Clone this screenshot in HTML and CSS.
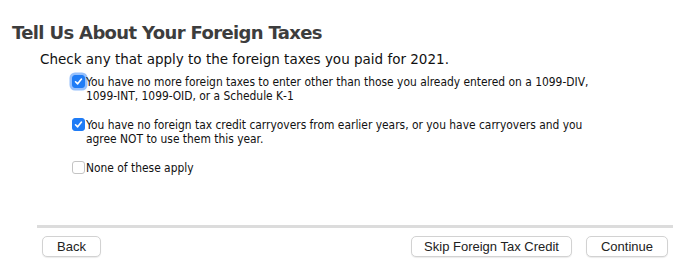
FILE: index.html
```html
<!DOCTYPE html>
<html>
<head>
<meta charset="utf-8">
<link rel="stylesheet" href="styles.css">
</head>
<body>
<div class="page">
  <h1 class="title">Tell Us About Your Foreign Taxes</h1>
  <p class="intro">Check any that apply to the foreign taxes you paid for 2021.</p>
  <div class="options">
    <label class="option">
      <span class="box checked focused"><svg viewBox="0 0 13 13" width="13" height="13"><path d="M3 6.8 L5.5 9.3 L10 3.6" fill="none" stroke="#fff" stroke-width="1.9" stroke-linecap="round" stroke-linejoin="round"/></svg></span>
      <span class="text">You have no more foreign taxes to enter other than those you already entered on a 1099‑DIV,<br>1099‑INT, 1099‑OID, or a Schedule K‑1</span>
    </label>
    <label class="option">
      <span class="box checked"><svg viewBox="0 0 13 13" width="13" height="13"><path d="M3 6.8 L5.5 9.3 L10 3.6" fill="none" stroke="#fff" stroke-width="1.9" stroke-linecap="round" stroke-linejoin="round"/></svg></span>
      <span class="text">You have no foreign tax credit carryovers from earlier years, or you have carryovers and you<br>agree NOT to use them this year.</span>
    </label>
    <label class="option">
      <span class="box"></span>
      <span class="text">None of these apply</span>
    </label>
  </div>
  <div class="footer">
    <button class="btn">Back</button>
    <div class="right">
      <button class="btn skip">Skip Foreign Tax Credit</button>
      <button class="btn">Continue</button>
    </div>
  </div>
</div>
</body>
</html>
```
FILE: styles.css
```css
html, body { margin: 0; padding: 0; background: #fff; }
body { font-family: "DejaVu Sans", Verdana, sans-serif; color: #000; }
.page { width: 697px; height: 272px; box-sizing: border-box; padding-top: 22px; }
.title {
  margin: 0 0 0 12px;
  font-size: 18px;
  font-weight: bold;
  color: #3d3d3d;
  line-height: 22px;
  letter-spacing: -0.65px;
}
.intro {
  margin: 7px 0 0 40px;
  font-size: 13.5px;
  line-height: 17px;
  color: #111;
}
.options { margin: 7px 0 0 72px; display: flex; flex-direction: column; gap: 15px; }
.option {
  display: flex; align-items: flex-start;
  font-family: "DejaVu Sans Condensed", "DejaVu Sans", sans-serif;
  font-size: 11.9px; line-height: 14px; color: #111;
}
.box {
  width: 13px; height: 13px; box-sizing: border-box;
  border: 1px solid #c4c4c4; border-radius: 3px; background: #fff;
  margin-top: 0; margin-right: 1px; flex: none;
  display: flex; align-items: center; justify-content: center;
}
.box.checked { background: #1f7cf6; border-color: #1f7cf6; }
.box.focused { box-shadow: 0 0 0 2.5px rgba(80, 150, 250, 0.6); }
.box svg { display: block; }
.footer {
  margin: 50px 24px 0 37px;
  border-top: 3px solid #dcdcdc;
  padding: 8px 5px 0 5px;
  display: flex;
  justify-content: space-between;
}
.right { display: flex; gap: 14px; }
.btn {
  font-family: "Liberation Sans", Arial, sans-serif;
  font-size: 13px;
  color: #222;
  background: #fff;
  border: 1px solid #d2d2d2;
  border-radius: 5px;
  height: 21px;
  padding: 0 14px;
  box-shadow: 0 1px 1px rgba(0,0,0,0.08);
}
.btn.skip { padding: 0 12px; }
```
